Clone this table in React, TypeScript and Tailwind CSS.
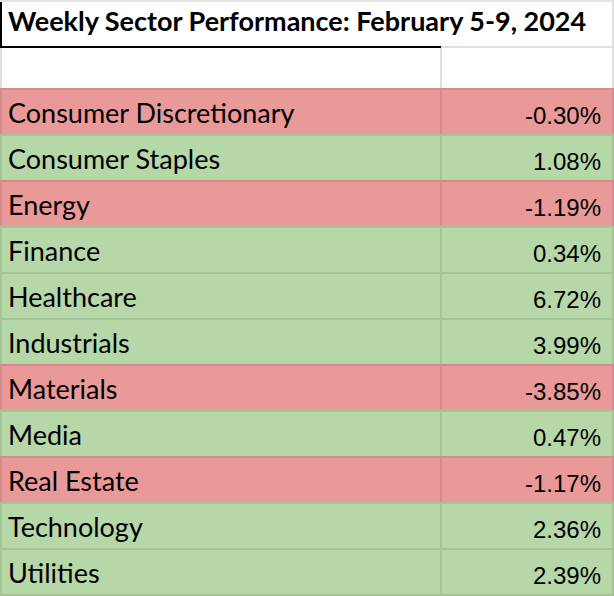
const rows: [string, string][] = [
  ["Consumer Discretionary", "-0.30%"],
  ["Consumer Staples", "1.08%"],
  ["Energy", "-1.19%"],
  ["Finance", "0.34%"],
  ["Healthcare", "6.72%"],
  ["Industrials", "3.99%"],
  ["Materials", "-3.85%"],
  ["Media", "0.47%"],
  ["Real Estate", "-1.17%"],
  ["Technology", "2.36%"],
  ["Utilities", "2.39%"],
];

const body = { fontFamily: "Lato, 'Open Sans', sans-serif" };
const nums = { fontFamily: "'Liberation Sans', Arial, sans-serif" };

function Row({ name, value, last }: { name: string; value: string; last: boolean }) {
  const neg = value.startsWith("-");
  const bg = neg ? "bg-[#ea9999]" : "bg-[#b6d7a8]";
  const line = neg ? "border-[#d58c8c]" : "border-[#a3c495]";
  return (
    <div className={`flex h-[46px] border-t-2 ${last ? "h-[48px] border-b-2" : ""} ${bg} ${line}`}>
      <div className={`w-[442px] border-l-2 border-r-2 ${line} pl-[6px] flex items-center text-[27px] leading-none text-black`} style={body}>
        <span>{name}</span>
      </div>
      <div className={`flex-1 border-r-2 ${line} pr-[11px] flex items-center justify-end text-[24px] leading-none text-black`} style={nums}>
        <span className="pt-[7px]">{value}</span>
      </div>
    </div>
  );
}

export default function App() {
  return (
    <div className="w-[614px] h-[596px] bg-white overflow-hidden">
      <div className="h-[2px] bg-[#e3e3e3]" />
      {/* title row */}
      <div className="flex h-[46px]">
        <div className="w-[441px] border-l-2 border-b-2 border-black pl-[6px] flex items-center whitespace-nowrap">
          <span className="pb-[7px] text-[27px] leading-none font-bold text-black" style={body}>
            Weekly Sector Performance: February 5-9, 2024
          </span>
        </div>
        <div className="flex-1 border-b-2 border-r-2 border-[#e0e0e0]" />
      </div>
      {/* empty row */}
      <div className="flex h-[40px]">
        <div className="w-[442px] border-l-2 border-r-2 border-[#e0e0e0]" />
        <div className="flex-1 border-r-2 border-[#e0e0e0]" />
      </div>
      {rows.map(([n, v], i) => (
        <Row key={n} name={n} value={v} last={i === rows.length - 1} />
      ))}
    </div>
  );
}
